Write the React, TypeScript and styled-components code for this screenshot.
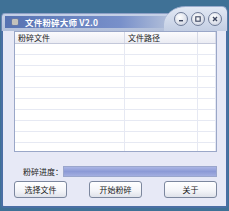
import React from 'react'
import styled, { createGlobalStyle } from 'styled-components'

const GlobalStyle = createGlobalStyle`
  html, body {
    margin: 0;
    padding: 0;
    background: #3f7196;
  }
  body {
    font-family: "Noto Sans CJK SC", "Liberation Sans", sans-serif;
    width: 229px;
    height: 211px;
    overflow: hidden;
  }
`

const ROWS = 10

const App = () => (
  <>
    <GlobalStyle />
    <Window>
      <TitleBar>
        <TitleLeft>
          <TitleBand>
            <AppIcon viewBox="0 0 8 8">
              <rect x="1" y="1" width="6" height="6" fill="#f4f0d8" stroke="#7b7f98" strokeWidth="0.8" />
              <path d="M2 3h4M2 5h4" stroke="#6b6f88" strokeWidth="0.7" />
            </AppIcon>
            <TitleText>文件粉碎大师 V2.0</TitleText>
          </TitleBand>
        </TitleLeft>
        <TitleRight>
          <RoundButton aria-label="minimize">
            <svg width="8" height="8" viewBox="0 0 8 8">
              <rect x="2" y="5" width="4" height="1.4" fill="#3c4660" />
            </svg>
          </RoundButton>
          <RoundButton aria-label="maximize">
            <svg width="8" height="8" viewBox="0 0 8 8">
              <rect x="1.8" y="1.8" width="4.4" height="4.4" fill="none" stroke="#3c4660" strokeWidth="1.1" />
            </svg>
          </RoundButton>
          <RoundButton aria-label="close">
            <svg width="8" height="8" viewBox="0 0 8 8">
              <path d="M2 2l4 4M6 2l-4 4" stroke="#3c4660" strokeWidth="1.4" />
            </svg>
          </RoundButton>
        </TitleRight>
      </TitleBar>
      <Body>
        <ListBox>
          <HeaderRow>
            <HeaderCell $width={110}>粉碎文件</HeaderCell>
            <HeaderCell $width={73}>文件路径</HeaderCell>
            <HeaderCell />
          </HeaderRow>
          {Array.from({ length: ROWS }).map((_, i) => (
            <Row key={i}>
              <Cell $width={110} />
              <Cell $width={73} />
              <Cell />
            </Row>
          ))}
        </ListBox>
        <ProgressRow>
          <ProgressLabel>粉碎进度：</ProgressLabel>
          <ProgressBar />
        </ProgressRow>
        <ButtonRow>
          <Button>选择文件</Button>
          <Button>开始粉碎</Button>
          <Button>关于</Button>
        </ButtonRow>
      </Body>
    </Window>
  </>
)

export default App

const Window = styled.div`
  display: flex;
  flex-direction: column;
  width: 227px;
  height: 205px;
  margin: 3px 0 0 1px;
`

const TitleBar = styled.div`
  display: flex;
  align-items: flex-end;
  height: 28px;
`

const TitleLeft = styled.div`
  flex: 1;
  height: 18px;
  padding: 2px 0 0 3px;
  box-sizing: border-box;
  background: linear-gradient(#c6d1e7, #b3c0da);
  border-top: 1px solid #8da0c6;
  border-left: 1px solid #6a82b0;
  border-top-left-radius: 4px;
`

const TitleBand = styled.div`
  display: flex;
  align-items: center;
  gap: 6px;
  height: 12px;
  padding-left: 6px;
  background: linear-gradient(90deg, #5672b2 0%, #7890ca 70%, #b3c0da 100%);
`

const AppIcon = styled.svg`
  width: 8px;
  height: 8px;
`

const TitleText = styled.span`
  color: #ffffff;
  font-size: 8.5px;
  font-weight: bold;
  letter-spacing: 0.2px;
  white-space: nowrap;
`

const TitleRight = styled.div`
  display: flex;
  align-items: center;
  justify-content: flex-end;
  gap: 3px;
  width: 64px;
  height: 25px;
  padding: 0 5px 1px 0;
  box-sizing: border-box;
  background: linear-gradient(#e2e8f4, #c3cee3);
  border-top: 1px solid #9aaccd;
  border-right: 1px solid #5c78a8;
  border-top-left-radius: 22px 18px;
  border-top-right-radius: 6px;
  margin-left: -6px;
`

const RoundButton = styled.div`
  display: flex;
  align-items: center;
  justify-content: center;
  width: 12px;
  height: 12px;
  border-radius: 50%;
  border: 1px solid #6f7c98;
  background: radial-gradient(circle at 40% 35%, #ffffff, #d6dbe7 70%, #b3bbcf);
`

const Body = styled.div`
  display: flex;
  flex-direction: column;
  flex: 1;
  padding: 0 9px 0 11px;
  background: #e7e9f6;
  border-left: 2px solid #4a6fa4;
  border-right: 2px solid #4a6fa4;
  border-bottom: 2px solid #4a6fa4;
  border-bottom-left-radius: 3px;
  border-bottom-right-radius: 3px;
`

const ListBox = styled.div`
  display: flex;
  flex-direction: column;
  height: 119px;
  background: #ffffff;
  border: 1px solid #9aa7c8;
  overflow: hidden;
`

const HeaderRow = styled.div`
  display: flex;
  height: 11px;
  flex-shrink: 0;
  background: linear-gradient(#fbfbfd, #ebecf3);
  border-bottom: 1px solid #c3c8da;
`

const HeaderCell = styled.div<{ $width?: number }>`
  ${({ $width }) => ($width ? `width: ${$width}px;` : 'flex: 1;')}
  box-sizing: border-box;
  padding-left: 3px;
  font-size: 8px;
  line-height: 11px;
  color: #1c1c1c;
  border-right: 1px solid #d6d9e6;
  white-space: nowrap;
`

const Row = styled.div`
  display: flex;
  height: 10px;
  flex-shrink: 0;
  border-bottom: 1px solid #e6e9f3;
`

const Cell = styled.div<{ $width?: number }>`
  ${({ $width }) => ($width ? `width: ${$width}px;` : 'flex: 1;')}
  box-sizing: border-box;
  border-right: 1px solid #e6e9f3;
`

const ProgressRow = styled.div`
  display: flex;
  align-items: center;
  margin-top: 14px;
  padding-left: 9px;
`

const ProgressLabel = styled.span`
  width: 40px;
  font-size: 8px;
  color: #222222;
  white-space: nowrap;
`

const ProgressBar = styled.div`
  flex: 1;
  height: 9px;
  border: 1px solid #9aa6cc;
  background: linear-gradient(#aab5e4, #8c9ad6 50%, #a3aee0);
`

const ButtonRow = styled.div`
  display: flex;
  justify-content: space-between;
  margin-top: 4px;
`

const Button = styled.button`
  width: 53px;
  height: 17px;
  padding: 0;
  border: 1px solid #7c879e;
  border-radius: 3px;
  background: linear-gradient(#ffffff, #f3f4f8 60%, #dfe2ea);
  font-family: "Noto Sans CJK SC", "Liberation Sans", sans-serif;
  font-size: 8px;
  color: #1a1a1a;
  cursor: pointer;
`
